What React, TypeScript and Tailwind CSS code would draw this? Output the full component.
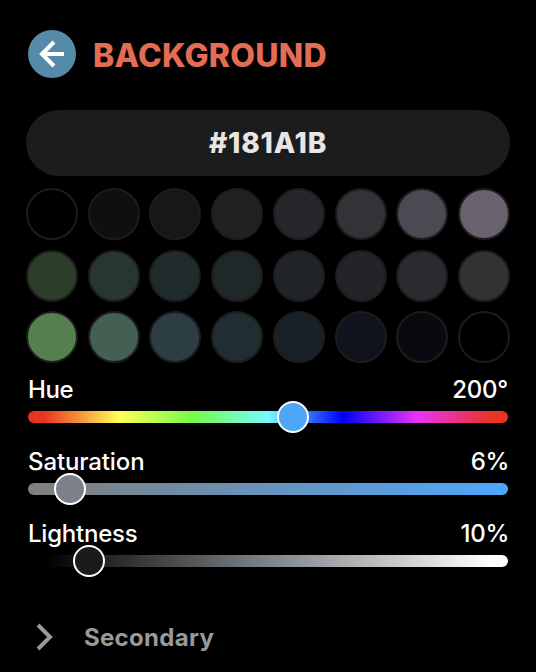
const swatches: string[] = [
  '#000000', '#0d100f', '#151817', '#1f2220', '#26272b', '#323337', '#4a4a52', '#69616d',
  '#2c3d29', '#283632', '#202b2b', '#202729', '#202328', '#232328', '#2a2a2f', '#343135',
  '#578051', '#436053', '#2c3e42', '#202d31', '#1a2028', '#10131b', '#0a090f', '#000000',
];

interface SliderProps {
  label: string;
  value: string;
  labelClass: string;
  valueClass: string;
  track: string;
  thumb: string;
  fraction: number;
}

function Slider({ label, value, labelClass, valueClass, track, thumb, fraction }: SliderProps) {
  return (
    <div className="h-[72px] px-0.5">
      <div className="flex h-8 items-center justify-between text-2xl leading-8 font-[450] text-white">
        <span className={labelClass}>{label}</span>
        <span className={valueClass}>{value}</span>
      </div>
      <div className={`relative mt-[5px] h-3 rounded-full ${track}`}>
        <div
          className={`absolute -top-2.5 size-8 rounded-full border-2 border-white ${thumb}`}
          style={{ left: `${fraction * 448}px` }}
        />
      </div>
    </div>
  );
}

export default function App() {
  return (
    <main className="h-[672px] w-[536px] overflow-hidden bg-black px-[26px] pt-[30px] font-['Inter','Liberation_Sans',sans-serif]">
      <header className="flex h-12 items-center gap-4 pl-0.5">
        <button className="flex size-12 items-center justify-center rounded-full bg-[#558ba8]" aria-label="Back">
          <svg className="size-12" viewBox="0 0 48 48" fill="none" stroke="white" strokeWidth="4">
            <path d="M36 24H14M26 12L14 24L26 36" />
          </svg>
        </button>
        <h1 className="pt-[3px] pl-px text-[32px] leading-[48px] font-extrabold tracking-[0.24px] text-[#e26d54]">BACKGROUND</h1>
      </header>

      <div className="mt-8 flex h-[66px] items-center justify-center rounded-full bg-[#1b1c1d] text-[28px] font-extrabold text-[#e8e6e3]">
        <span className="tracking-[0.8px]">#181A1B</span>
      </div>

      <div className="mt-3 grid h-[175px] grid-cols-[repeat(8,52px)] content-between justify-between">
        {swatches.map((color, i) => (
          <div key={i} className="size-[52px] rounded-full border-2 border-[#1c1c1c]" style={{ backgroundColor: color }} />
        ))}
      </div>

      <section className="mt-[11px]">
        <Slider
          label="Hue"
          value="200°"
          labelClass="tracking-[-0.4px]"
          valueClass="tracking-[-0.25px]"
          track="bg-[linear-gradient(to_right,#eb3323_16px,#ffff54_90.67px,#75fb4c_165.33px,#75fbfd_240px,#0000f5_314.67px,#ea33f7_389.33px,#eb3323_464px)]"
          thumb="bg-[#4ea6f8]"
          fraction={200 / 360}
        />
        <Slider
          label="Saturation"
          value="6%"
          labelClass="tracking-[-0.12px]"
          valueClass="-mr-px tracking-[-0.4px]"
          track="bg-[linear-gradient(to_right,#808080_16px,#4ea6f8_464px)]"
          thumb="bg-[#7d8289]"
          fraction={0.057}
        />
        <Slider
          label="Lightness"
          value="10%"
          labelClass="tracking-[-0.22px]"
          valueClass="-mr-px tracking-[-0.3px]"
          track="bg-[linear-gradient(to_right,#000000_16px,#7d8388_240px,#ffffff_464px)]"
          thumb="bg-[#1a1b1c]"
          fraction={0.1}
        />
      </section>

      <div className="mt-[31px] flex h-8 items-center pl-0.5 text-[#999999]">
        <svg className="size-8" viewBox="0 0 32 32" fill="none" stroke="currentColor" strokeWidth="4">
          <path d="M10 4L22 16L10 28" />
        </svg>
        <span className="ml-6 pt-0.5 text-2xl leading-8 font-bold tracking-[0.3px]">Secondary</span>
      </div>
    </main>
  );
}
